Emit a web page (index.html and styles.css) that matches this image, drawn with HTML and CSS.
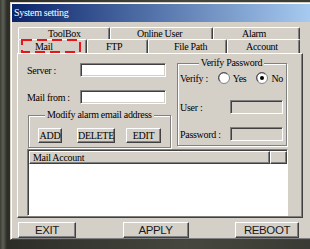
FILE: index.html
```html
<!DOCTYPE html>
<html lang="en">
<head>
    <meta charset="UTF-8">
    <meta name="viewport" content="width=device-width, initial-scale=1.0">
    <title>System setting</title>
    <link rel="stylesheet" href="styles.css">
</head>
<body>
    <div class="window">
        <div class="titlebar">System setting</div>
        <div class="client">
            <div class="tab-row row-back">
                <div class="tab tab-toolbox">ToolBox</div>
                <div class="tab tab-online">Online User</div>
                <div class="tab tab-alarm">Alarm</div>
            </div>
            <div class="tab-row row-front">
                <div class="tab tab-mail active">Mail</div>
                <div class="tab tab-ftp">FTP</div>
                <div class="tab tab-path">File Path</div>
                <div class="tab tab-account">Account</div>
            </div>

            <div class="panel">
                <div class="left-col">
                    <div class="field-row">
                        <label>Server :</label>
                        <div class="textbox"></div>
                    </div>
                    <div class="field-row">
                        <label>Mail from :</label>
                        <div class="textbox"></div>
                    </div>
                    <fieldset class="group group-modify">
                        <legend>Modify alarm email address</legend>
                        <div class="btn-row">
                            <button class="btn btn-add">ADD</button>
                            <button class="btn btn-delete">DELETE</button>
                            <button class="btn btn-edit">EDIT</button>
                        </div>
                    </fieldset>
                </div>

                <fieldset class="group group-verify">
                    <legend>Verify Password</legend>
                    <div class="verify-row">
                        <label>Verify :</label>
                        <span class="radio-opt">
                            <svg class="radio" width="12" height="12" viewBox="0 0 12 12">
                                <circle cx="6" cy="6" r="5.5" fill="#fff" stroke="#808080"/>
                                <path d="M2.2 9.2 A4.5 4.5 0 0 1 9.2 2.2" fill="none" stroke="#404040"/>
                            </svg>
                            Yes
                        </span>
                        <span class="radio-opt">
                            <svg class="radio" width="12" height="12" viewBox="0 0 12 12">
                                <circle cx="6" cy="6" r="5.5" fill="#fff" stroke="#808080"/>
                                <path d="M2.2 9.2 A4.5 4.5 0 0 1 9.2 2.2" fill="none" stroke="#404040"/>
                                <circle cx="6" cy="6" r="2" fill="#000"/>
                            </svg>
                            No
                        </span>
                    </div>
                    <div class="cred-row">
                        <label>User :</label>
                        <div class="textbox textbox-off"></div>
                    </div>
                    <div class="cred-row">
                        <label>Password :</label>
                        <div class="textbox textbox-off"></div>
                    </div>
                </fieldset>

                <div class="list">
                    <div class="list-head">
                        <span class="head-cell head-main">Mail Account</span>
                        <span class="head-cell head-rest"></span>
                    </div>
                </div>
            </div>

            <div class="bottom-bar">
                <button class="big-btn btn-exit">EXIT</button>
                <button class="big-btn btn-apply">APPLY</button>
                <button class="big-btn btn-reboot">REBOOT</button>
            </div>
        </div>
    </div>

    <!-- red dashed marker round the Mail tab -->
    <svg class="marker" width="60" height="14" viewBox="0 0 60 14">
        <rect x="1" y="1" width="58" height="12" fill="none" stroke="#e8161b" stroke-width="2" stroke-dasharray="10 5"/>
    </svg>
</body>
</html>
```

FILE: styles.css
```css
:root {
    --face: #d4d0c8;
    --light: #ffffff;
    --shadow: #808080;
    --dark: #404040;
}

* {
    box-sizing: border-box;
}

body {
    margin: 0;
    width: 310px;
    height: 249px;
    overflow: hidden;
    position: relative;
    background: linear-gradient(90deg, #3b3d35 0, #5d6054 3px, #2c2d27 7px, #46483f 60%, #3a3b34 100%);
    font-family: "Liberation Serif", "DejaVu Serif", serif;
    font-size: 10px;
    letter-spacing: -0.3px;
    color: #000;
}

/* the dialog runs off the right edge of the shot, so no right frame */
.window {
    margin: 2px 0 0 10px;
    width: 300px;
    padding: 1px 0 1px 1px;
    background: var(--face);
    border: 1px solid;
    border-right: 0;
    border-color: var(--face) var(--dark) var(--dark) var(--face);
    box-shadow: inset 1px 1px 0 var(--light), inset 0 -1px 0 var(--shadow);
}

.titlebar {
    height: 18px;
    line-height: 18px;
    padding-left: 2px;
    color: #fff;
    background: linear-gradient(90deg, #0a246a, #a6caf0);
}

.client {
    padding: 5px 0 0 5px;
}

/* tabs */
.tab-row {
    display: flex;
    margin-left: 1px;
}

.tab {
    height: 12px;
    line-height: 11px;
    white-space: nowrap;
    border-top: 1px solid var(--light);
    border-left: 1px solid var(--light);
    border-right: 1px solid var(--dark);
    border-radius: 2px 2px 0 0;
    box-shadow: inset -1px 0 0 var(--shadow);
}

.row-front .tab {
    height: 14px;
    line-height: 13px;
}

.tab-toolbox { width: 92px; padding-left: 29px; }
.tab-online  { width: 103px; padding-left: 26px; }
.tab-alarm   { width: 87px; padding-left: 28px; }
.tab-mail    { width: 69px; padding-left: 16px; }
.tab-ftp     { width: 61px; padding-left: 18px; }
.tab-path    { width: 79px; padding-left: 25px; }
.tab-account { width: 73px; padding-left: 18px; }

/* tab page */
.panel {
    width: 286px;
    height: 165px;
    padding: 3px 0 0 9px;
    border: 1px solid;
    border-color: var(--light) var(--dark) var(--dark) var(--light);
    box-shadow: inset -1px -1px 0 var(--shadow);
    display: grid;
    grid-template-columns: 145px 110px;
    column-gap: 5px;
    align-content: start;
    align-items: start;
}

.left-col {
    padding-top: 6px;
}

.field-row {
    display: flex;
    align-items: center;
    height: 14px;
}

.field-row + .field-row {
    margin-top: 13px;
}

.field-row label {
    width: 53px;
}

.textbox {
    width: 86px;
    height: 14px;
    background: #fff;
    border: 1px solid;
    border-color: var(--shadow) var(--light) var(--light) var(--shadow);
    box-shadow: inset 1px 1px 0 var(--dark), inset -1px -1px 0 var(--face);
}

.textbox-off {
    width: 53px;
    background: var(--face);
}

/* group boxes */
.group {
    margin: 0;
    padding: 0;
    min-width: 0;
    border: 1px solid var(--shadow);
    box-shadow: inset 1px 1px 0 var(--light), 1px 1px 0 var(--light);
}

.group legend {
    padding: 0 2px;
    line-height: 12px;
    background: var(--face);
}

.group-modify {
    margin: 5px 0 0 1px;
    width: 143px;
    padding-bottom: 4px;
}

.group-modify legend {
    margin-left: 16px;
}

.btn-row {
    display: flex;
    margin-top: 7px;
    padding-left: 9px;
}

.btn {
    height: 15px;
    padding: 0;
    font: inherit;
    letter-spacing: -0.3px;
    line-height: 13px;
    color: #000;
    background: var(--face);
    border: 1px solid;
    border-color: var(--light) var(--dark) var(--dark) var(--light);
    box-shadow: inset -1px -1px 0 var(--shadow);
}

.btn-add { width: 24px; }
.btn-delete { width: 38px; margin-left: 15px; }
.btn-edit { width: 35px; margin-left: 11px; }

.group-verify {
    width: 110px;
    padding: 0 3px 4px 2px;
}

.group-verify legend {
    margin: 0 auto;
}

.verify-row {
    display: flex;
    align-items: center;
    height: 12px;
    margin-top: 3px;
}

.verify-row label {
    width: 38px;
}

.radio-opt {
    display: inline-flex;
    align-items: center;
    gap: 3px;
}

.radio-opt + .radio-opt {
    margin-left: 10px;
}

.cred-row {
    display: flex;
    align-items: center;
    height: 14px;
    margin-top: 13px;
}

.verify-row + .cred-row {
    margin-top: 16px;
}

.cred-row label {
    width: 50px;
}

/* account list */
.list {
    grid-column: 1 / -1;
    margin-top: 1px;
    width: 261px;
    height: 67px;
    padding: 1px 0 0 1px;
    background: #fff;
    border: 1px solid;
    border-color: var(--shadow) var(--light) var(--light) var(--shadow);
    box-shadow: inset 1px 1px 0 var(--dark);
}

.list-head {
    display: flex;
    height: 13px;
}

.head-cell {
    height: 13px;
    line-height: 11px;
    background: var(--face);
    border: 1px solid;
    border-color: var(--light) var(--dark) var(--dark) var(--light);
    box-shadow: inset -1px -1px 0 var(--shadow);
}

.head-main {
    width: 241px;
    padding-left: 3px;
}

.head-rest {
    flex: 1;
}

/* dialog buttons */
.bottom-bar {
    display: flex;
    justify-content: space-between;
    width: 281px;
    margin: 4px 0 0 1px;
}

.big-btn {
    height: 16px;
    padding: 0;
    font-family: "Liberation Sans", Arial, sans-serif;
    font-size: 11.5px;
    letter-spacing: -0.4px;
    line-height: 14px;
    color: #1a1a1a;
    background: var(--face);
    border: 1px solid;
    border-color: var(--light) var(--dark) var(--dark) var(--light);
    box-shadow: inset -1px -1px 0 var(--shadow);
}

.btn-exit { width: 58px; }
.btn-apply { width: 66px; }
.btn-reboot { width: 64px; }

.marker {
    position: absolute;
    left: 21px;
    top: 39px;
}
```
